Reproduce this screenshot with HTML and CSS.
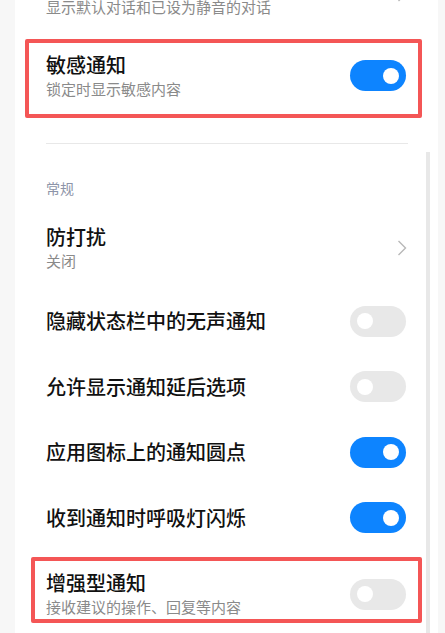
FILE: index.html
```html
<!DOCTYPE html>
<html lang="zh-CN">
<head>
    <meta charset="UTF-8">
    <meta name="viewport" content="width=device-width, initial-scale=1.0">
    <title>通知设置</title>
    <link rel="stylesheet" href="styles.css">
</head>
<body>
    <div class="card">
        <div class="item first">
            <div class="text">
                <div class="title">对话</div>
                <div class="desc">显示默认对话和已设为静音的对话</div>
            </div>
            <svg class="chevron" width="10" height="16" viewBox="0 0 10 16"><path d="M1.5 1 L8.5 8 L1.5 15" fill="none" stroke="#b8b8b8" stroke-width="1.4"/></svg>
        </div>

        <div class="item marked top-mark">
            <div class="text">
                <div class="title">敏感通知</div>
                <div class="desc">锁定时显示敏感内容</div>
            </div>
            <span class="switch on"></span>
        </div>

        <div class="divider"></div>

        <div class="section">常规</div>

        <div class="item dnd">
            <div class="text">
                <div class="title">防打扰</div>
                <div class="desc">关闭</div>
            </div>
            <svg class="chevron" width="10" height="16" viewBox="0 0 10 16"><path d="M1.5 1 L8.5 8 L1.5 15" fill="none" stroke="#b8b8b8" stroke-width="1.4"/></svg>
        </div>

        <div class="item single first-single">
            <div class="title">隐藏状态栏中的无声通知</div>
            <span class="switch"></span>
        </div>
        <div class="item single">
            <div class="title">允许显示通知延后选项</div>
            <span class="switch"></span>
        </div>
        <div class="item single">
            <div class="title">应用图标上的通知圆点</div>
            <span class="switch on"></span>
        </div>
        <div class="item single">
            <div class="title">收到通知时呼吸灯闪烁</div>
            <span class="switch on"></span>
        </div>

        <div class="item marked bottom-mark">
            <div class="text">
                <div class="title">增强型通知</div>
                <div class="desc">接收建议的操作、回复等内容</div>
            </div>
            <span class="switch"></span>
        </div>

        <div class="scrollbar"></div>
    </div>
</body>
</html>
```

FILE: styles.css
```css
body {
    margin: 0;
    background: #f7f7f7;
    font-family: "Noto Sans CJK SC", "Noto Sans", sans-serif;
    overflow: hidden;
}

.card {
    position: relative;
    width: 423px;
    margin: -30px 0 0 15px;
    padding-bottom: 40px;
    background: #ffffff;
}

.item {
    display: flex;
    align-items: center;
    justify-content: space-between;
    margin: 0 32px 0 31px;
}

.title {
    font-size: 20px;
    line-height: 26px;
    font-weight: 500;
    color: #111111;
}

.desc {
    font-size: 15px;
    line-height: 22px;
    color: #8a8a8a;
}

.chevron {
    flex-shrink: 0;
    margin-right: -1px;
}

.marked {
    border: 4px solid #f45656;
    border-radius: 2px;
    margin-right: 16px;
}

.top-mark {
    margin-top: 21px;
    margin-left: 10px;
    padding: 8.5px 12px 14.5px 17px;
}

.bottom-mark {
    margin-top: 6.5px;
    margin-left: 16px;
    padding: 9px 12px 1px 11px;
}

.divider {
    height: 1px;
    margin: 25px 30px 0 31px;
    background: #e8e8e8;
}

.section {
    margin: 34px 0 0 31px;
    font-size: 14px;
    line-height: 20px;
    color: #8d94a8;
}

.dnd {
    margin-top: 26px;
}

.single {
    height: 65.5px;
}

.first-single {
    margin-top: 16.5px;
}

.switch {
    display: flex;
    align-items: center;
    flex-shrink: 0;
    box-sizing: border-box;
    width: 56px;
    height: 31px;
    padding: 0 7px;
    border-radius: 16px;
    background: #e8e8e8;
}

.switch::after {
    content: "";
    width: 16px;
    height: 16px;
    border-radius: 50%;
    background: #ffffff;
}

.switch.on {
    justify-content: flex-end;
    background: #0d84ff;
}

.scrollbar {
    position: absolute;
    left: 411px;
    top: 182px;
    bottom: 0;
    width: 4px;
    background: #e8e8e8;
}
```
